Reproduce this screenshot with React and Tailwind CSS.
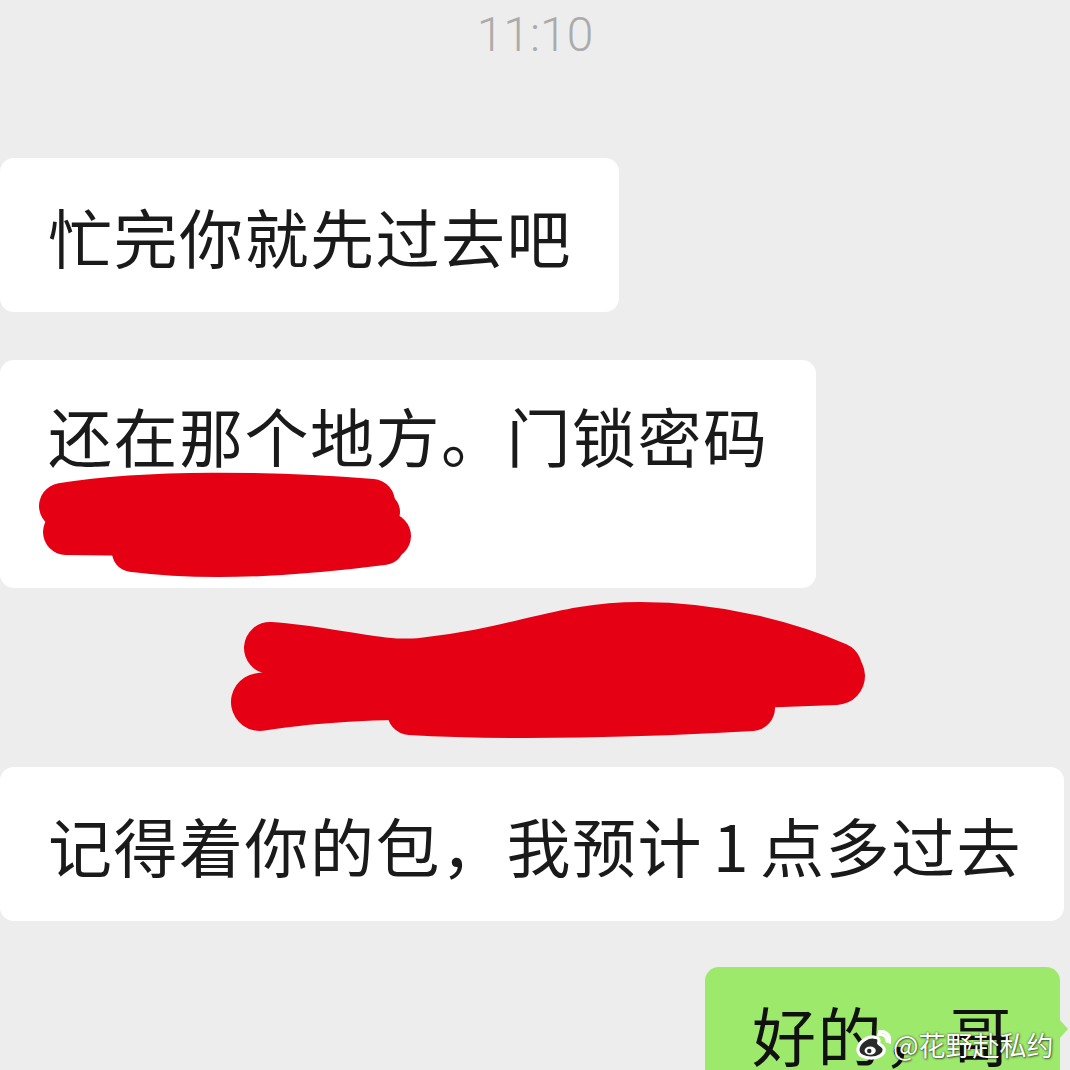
const cjk = { fontFamily: '"Noto Sans CJK SC", "Noto Sans", sans-serif' };

const Bubble = ({ children, className = "" }) => (
    <div
        className={`shrink-0 bg-white rounded-[14px] pl-[48px] text-[64px] leading-[80px] text-[#1a1a1a] tracking-[1.5px] ${className}`}
        style={cjk}
    >
        {children}
    </div>
);

const CodeScribble = () => (
    <svg className="absolute left-0 top-0" width="816" height="228" viewBox="0 360 816 228">
        <g stroke="#e60013" strokeLinecap="round" strokeLinejoin="round" fill="none">
            <path d="M 62 506 C 150 492, 270 494, 372 502" strokeWidth="46" />
            <path d="M 66 532 L 388 536" strokeWidth="46" />
            <path d="M 132 552 C 210 562, 300 556, 384 545" strokeWidth="40" />
            <path d="M 330 500 L 380 512" strokeWidth="40" />
        </g>
    </svg>
);

const GapScribble = () => (
    <svg className="block shrink-0" width="1070" height="179" viewBox="0 588 1070 179">
        <g stroke="#e60013" strokeLinecap="round" strokeLinejoin="round" fill="none">
            <path d="M 270 648 C 330 652, 380 668, 420 664 C 520 654, 560 628, 640 628 C 720 628, 790 648, 836 668" strokeWidth="52" />
            <path d="M 260 702 C 330 690, 420 690, 520 688 L 836 676" strokeWidth="58" />
            <path d="M 410 712 C 510 718, 650 714, 752 708" strokeWidth="46" />
            <path d="M 420 680 L 700 660" strokeWidth="50" />
        </g>
    </svg>
);

const WeiboMark = () => (
    <svg width="36" height="30" viewBox="0 0 38 32">
        <g fill="none" stroke="#ffffff" strokeWidth="3.4" strokeLinecap="round">
            <path d="M 22 8 C 14 5, 4 13, 3 20 C 2 27, 10 30, 17 30 C 25 30, 31 26, 31 21 C 31 17, 26 16, 25 14 C 26 10, 25 8, 22 8 Z" fill="#2a2a2a" />
            <path d="M 25 5 C 30 4, 34 7, 34 12" />
            <path d="M 26 1.8 C 33 0.5, 38 6, 37 13" />
        </g>
        <ellipse cx="16" cy="22" rx="6" ry="4.5" fill="#ffffff" />
        <circle cx="15" cy="22.5" r="2.4" fill="#2a2a2a" />
    </svg>
);

export default function App() {
    return (
        <div className="w-[1070px] h-[1070px] overflow-hidden bg-[#ededed] flex flex-col">
            <div
                className="shrink-0 h-[158px] pt-[10px] text-center text-[48px] leading-[50px] font-light text-[#ababab]"
                style={{ fontFamily: 'Roboto, "Liberation Sans", sans-serif' }}
            >
                11:10
            </div>

            <Bubble className="w-[619px] py-[37px]">忙完你就先过去吧</Bubble>

            <div className="shrink-0 h-[48px]" />

            <div className="shrink-0 relative w-[816px]">
                <Bubble className="py-[34px]">
                    <div>还在那个地方。门锁密码</div>
                    <div className="text-white select-none">0000</div>
                </Bubble>
                <CodeScribble />
            </div>

            <GapScribble />

            <Bubble className="w-[1064px] py-[37px]">
                记得着你的包，我预计<span className="px-[10px]">1</span>点多过去
            </Bubble>

            <div className="shrink-0 h-[46px]" />

            <div className="shrink-0 flex justify-end pr-[10px]">
                <div className="relative">
                    <div
                        className="w-[355px] h-[140px] bg-[#9de96c] rounded-[14px] pl-[47px] pt-[26px] text-[64px] leading-[80px] text-[#111] tracking-[1.5px]"
                        style={cjk}
                    >
                        好的，哥
                    </div>
                    <div className="absolute right-[-8px] top-[52px] w-0 h-0 border-y-[10px] border-y-transparent border-l-[9px] border-l-[#9de96c]" />
                    <div className="absolute left-[150px] top-[62px] flex items-center gap-[2px] whitespace-nowrap">
                        <WeiboMark />
                        <span
                            className="text-[27px] leading-[32px] text-white [text-shadow:0_0_2px_rgba(0,0,0,0.7),1px_1px_2px_rgba(0,0,0,0.5)]"
                            style={cjk}
                        >
                            @花野赴私约
                        </span>
                    </div>
                </div>
            </div>
        </div>
    );
}
